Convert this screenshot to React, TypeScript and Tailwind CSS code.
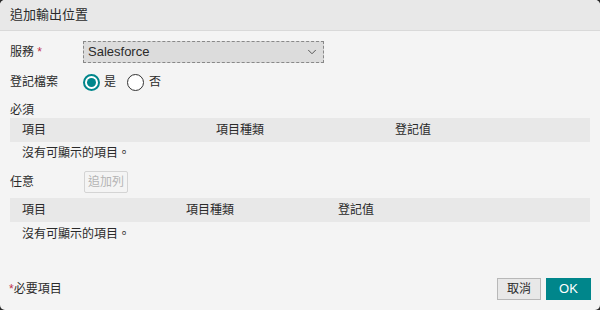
import { ChevronDown } from "lucide-react";

const font = { fontFamily: '"Liberation Sans", "Noto Sans CJK TC", sans-serif' };

const TableBlock = ({ cols, gap }: { cols: [string, number][]; gap: string }) => (
  <div className="mx-[10px]">
    <div className="flex h-[24px] items-center bg-[#e8e8e8] pl-[12px]">
      {cols.map(([label, w]) => (
        <div key={label} style={{ width: w }} className="shrink-0">
          {label}
        </div>
      ))}
    </div>
    <p className={`pl-[12px] leading-[18px] ${gap}`}>沒有可顯示的項目。</p>
  </div>
);

const App = () => {
  return (
    <div className="h-[310px] w-[600px] bg-[#2a2a2a]">
      <div
        className="flex h-full w-full flex-col overflow-hidden rounded-[5px] bg-[#f4f4f4] text-[12px] text-[#2a2a2a]"
        style={font}
      >
        <div className="flex h-[31px] shrink-0 items-center border-b border-[#d9d9d9] bg-[#e8e8e8] pl-[10px] text-[13px]">
          追加輸出位置
        </div>

        <div className="flex flex-1 flex-col">
          <div className="mt-[10px] flex h-[22px] items-center pl-[10px]">
            <span className="w-[73px]">
              服務 <span className="text-[#c0304a]">*</span>
            </span>
            <div className="flex h-[22px] w-[241px] items-center justify-between border border-dashed border-[#888] bg-[#dcdcdc] px-[4px] text-[13px]">
              <span>Salesforce</span>
              <ChevronDown size={14} strokeWidth={1.5} className="text-[#444]" />
            </div>
          </div>

          <div className="mt-[8px] flex h-[22px] items-center pl-[10px]">
            <span className="w-[73px]">登記檔案</span>
            <div className="flex items-center">
              <span className="flex h-[17px] w-[17px] items-center justify-center rounded-full border-2 border-[#00868b] bg-white">
                <span className="h-[9px] w-[9px] rounded-full bg-[#00868b]" />
              </span>
              <span className="ml-[4px]">是</span>
              <span className="ml-[11px] h-[17px] w-[17px] rounded-full border border-[#333] bg-white" />
              <span className="ml-[5px]">否</span>
            </div>
          </div>

          <p className="mt-[9px] pl-[10px] leading-[16px]">必須</p>
          <TableBlock gap="pt-[2px]" cols={[["項目", 194], ["項目種類", 179], ["登記值", 100]]} />

          <div className="mt-[9px] flex h-[22px] items-center pl-[10px]">
            <span className="w-[74px]">任意</span>
            <button
              disabled
              className="h-[22px] rounded-[2px] border border-[#d4d4d4] bg-[#f4f4f4] px-[3px] text-[#b5b5b5]"
            >
              追加列
            </button>
          </div>

          <div className="mt-[5px]">
            <TableBlock gap="pt-[3px]" cols={[["項目", 164], ["項目種類", 152], ["登記值", 100]]} />
          </div>

          <div className="mt-auto mb-[10px] flex items-center justify-between px-[9px]">
            <span>
              <span className="text-[#c0304a]">*</span>必要項目
            </span>
            <div className="flex gap-[5px]">
              <button className="h-[22px] w-[44px] border border-[#b8b8b8] bg-[#e8e8e8]">取消</button>
              <button className="h-[22px] w-[45px] bg-[#00868b] text-[13px] text-white">OK</button>
            </div>
          </div>
        </div>
      </div>
    </div>
  );
};

export default App;
